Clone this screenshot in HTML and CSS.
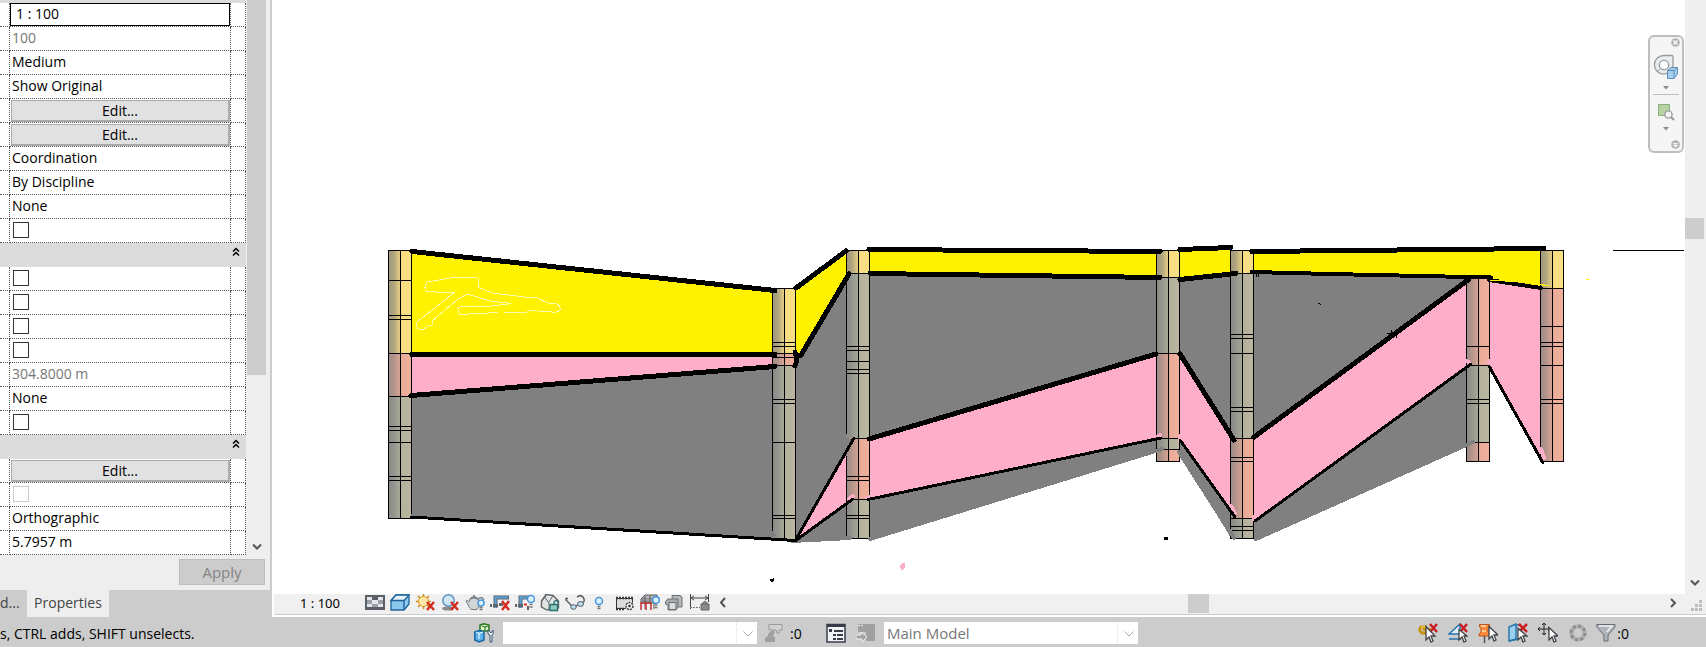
FILE: index.html
```html
<!DOCTYPE html>
<html lang="en">
<head>
<meta charset="utf-8">
<title>Model view</title>
<link rel="stylesheet" href="styles.css">
</head>
<body>
<div class="workspace">
  <aside class="side">
    <div class="panel">
      <div class="properties">
        <table class="grid">
          <colgroup><col class="col-name"><col class="col-value"><col class="col-link"></colgroup>
          <tbody>
            <tr><td></td><td class="tight"><input class="scale" type="text" value="1 : 100" aria-label="View scale"></td><td></td></tr>
            <tr><td></td><td class="muted">100</td><td></td></tr>
            <tr><td></td><td>Medium</td><td></td></tr>
            <tr><td></td><td>Show Original</td><td></td></tr>
            <tr><td></td><td class="tight"><button class="edit" type="button">Edit...</button></td><td></td></tr>
            <tr><td></td><td class="tight"><button class="edit" type="button">Edit...</button></td><td></td></tr>
            <tr><td></td><td>Coordination</td><td></td></tr>
            <tr><td></td><td>By Discipline</td><td></td></tr>
            <tr><td></td><td>None</td><td></td></tr>
            <tr><td></td><td><input class="check" type="checkbox" aria-label="Sun path"></td><td></td></tr>
            <tr class="group"><td colspan="3"><button class="fold" type="button" aria-label="Collapse group"><svg width="8" height="10" viewBox="0 0 8 10"><path d="M1 4.500 4 1.500 7 4.500M1 8.500 4 5.500 7 8.500"/></svg></button></td></tr>
            <tr><td></td><td><input class="check" type="checkbox" aria-label="Crop view"></td><td></td></tr>
            <tr><td></td><td><input class="check" type="checkbox" aria-label="Crop region visible"></td><td></td></tr>
            <tr><td></td><td><input class="check" type="checkbox" aria-label="Annotation crop"></td><td></td></tr>
            <tr><td></td><td><input class="check" type="checkbox" aria-label="Far clip active"></td><td></td></tr>
            <tr><td></td><td class="muted">304.8000 m</td><td></td></tr>
            <tr><td></td><td>None</td><td></td></tr>
            <tr><td></td><td><input class="check" type="checkbox" aria-label="Section box"></td><td></td></tr>
            <tr class="group"><td colspan="3"><button class="fold" type="button" aria-label="Collapse group"><svg width="8" height="10" viewBox="0 0 8 10"><path d="M1 4.500 4 1.500 7 4.500M1 8.500 4 5.500 7 8.500"/></svg></button></td></tr>
            <tr><td></td><td class="tight"><button class="edit" type="button">Edit...</button></td><td></td></tr>
            <tr><td></td><td><input class="check" type="checkbox" disabled aria-label="Locked orientation"></td><td></td></tr>
            <tr><td></td><td>Orthographic</td><td></td></tr>
            <tr><td></td><td>5.7957 m</td><td></td></tr>
          </tbody>
        </table>
        <div class="side-scroll">
          <div class="side-thumb"></div>
          <svg width="12" height="10" viewBox="0 0 12 10"><path class="chevron" d="M2 2.500 6 6.500 10 2.500"/></svg>
        </div>
      </div>
      <div class="actions"><button class="apply" type="button" disabled>Apply</button></div>
    </div>
    <div class="tabs"><button class="tab" type="button">d...</button><button class="tab active" type="button">Properties</button></div>
  </aside>

  <main class="view">
    <div class="stage">
      <div class="canvas">
        <svg class="section" viewBox="272 0 1413 594" role="img" aria-label="Soil strata between seven boreholes">
          <defs>
            <linearGradient id="sand"><stop offset="0" stop-color="#9e957e"/><stop offset=".25" stop-color="#b0a57f"/><stop offset=".5" stop-color="#e2ca82"/><stop offset=".6" stop-color="#f7dc82"/><stop offset="1" stop-color="#f8df84"/></linearGradient>
            <linearGradient id="clay"><stop offset="0" stop-color="#9c8b87"/><stop offset=".25" stop-color="#b3948b"/><stop offset=".5" stop-color="#d3a293"/><stop offset=".6" stop-color="#e9ab98"/><stop offset="1" stop-color="#efb09b"/></linearGradient>
            <linearGradient id="rock"><stop offset="0" stop-color="#898986"/><stop offset=".25" stop-color="#94958c"/><stop offset=".5" stop-color="#a5a797"/><stop offset=".6" stop-color="#b5b29c"/><stop offset="1" stop-color="#bab6a1"/></linearGradient>
          </defs>
          <g shape-rendering="crispEdges">
            <g fill="#808080">
              <path d="M411 395 773 366V539L411 517Z"/>
              <path d="M796 355H802L848 274V538L820 541H796Z"/>
              <path d="M870 273 1157 277V452L870 540Z"/>
              <path d="M1180 280 1231 273V538L1180 455Z"/>
              <path d="M1254 272 1467 277V445L1256 541H1254Z"/>
            </g>
            <g fill="#fff200">
              <path d="M411 252 773 290V354H411Z"/>
              <path d="M796 288 847 251V276L801 355H796Z"/>
              <path d="M870 250 1157 252V277L870 273Z"/>
              <path d="M1180 250 1231 248V274L1180 280Z"/>
              <path d="M1254 252 1541 249V288L1489 279 1254 273Z"/>
            </g>
            <g fill="#ffaec9">
              <path d="M411 354H773V366L411 395Z"/>
              <path d="M796 540 847 450V504Z"/>
              <path d="M870 438 1157 354V438L870 499Z"/>
              <path d="M1180 354 1231 438V512L1180 440Z"/>
              <path d="M1254 438 1467 280V366L1254 520Z"/>
              <path d="M1489 280 1541 289V461L1489 366Z"/>
            </g>
            <g class="bore">
              <rect fill="url(#sand)" x="388" y="250" width="23" height="103"/><rect fill="url(#clay)" x="388" y="353" width="23" height="43"/><rect fill="url(#rock)" x="388" y="396" width="23" height="122"/>
              <path d="M388.500 518.500V250.500H411.500V514M388 518.500H411M400.500 250V518M388 280.500H411M388 315.500H411M388 319.500H411M388 353.500H411M388 396.500H411M388 426.500H411M388 430.500H411M388 442.500H411M388 476.500H411M388 480.500H411"/>
            </g>
            <g class="bore">
              <rect fill="url(#sand)" x="772" y="288" width="23" height="65"/><rect fill="url(#clay)" x="772" y="353" width="23" height="12"/><rect fill="url(#rock)" x="772" y="365" width="23" height="174"/>
              <path d="M772.500 532V288.500H795.500V538M784.500 288V538M772 342.500H795M772 346.500H795M772 353.500H795M772 357.500H795M772 365.500H795M772 399.500H795M772 403.500H795M772 442.500H795M772 515.500H795M772 518.500H795"/>
            </g>
            <g class="bore">
              <rect fill="url(#sand)" x="846" y="250" width="23" height="23"/><rect fill="url(#rock)" x="846" y="273" width="23" height="165"/><rect fill="url(#clay)" x="846" y="438" width="23" height="61"/><rect fill="url(#rock)" x="846" y="499" width="23" height="39"/>
              <path d="M846.500 434V250.500H869.500V538M846.500 456V536M852 538.500H869M858.500 250V538M846 273.500H869M846 346.500H869M846 350.500H869M846 361.500H869M846 369.500H869M846 373.500H869M852 438.500H869M846 476.500H869M846 480.500H869M852 499.500H869M846 515.500H869M846 518.500H869"/>
              <path class="fill-rock" d="M846 437 852 440 846 452Z"/>
            </g>
            <g class="bore">
              <rect fill="url(#sand)" x="1156" y="250" width="23" height="27"/><rect fill="url(#rock)" x="1156" y="277" width="23" height="76"/><rect fill="url(#clay)" x="1156" y="353" width="23" height="85"/><rect fill="url(#rock)" x="1156" y="438" width="23" height="11"/><rect fill="url(#clay)" x="1156" y="449" width="23" height="12"/>
              <path d="M1156.500 250.500H1179.500V461.500H1156.500ZM1168.500 250V461M1156 277.500H1179M1156 353.500H1179M1156 438.500H1179M1156 449.500H1179"/>
            </g>
            <g class="bore">
              <rect fill="url(#sand)" x="1230" y="250" width="23" height="23"/><rect fill="url(#rock)" x="1230" y="273" width="23" height="165"/><rect fill="url(#clay)" x="1230" y="438" width="23" height="80"/><rect fill="url(#rock)" x="1230" y="518" width="23" height="20"/>
              <path d="M1230.500 250.500H1253.500V538.500H1230.500ZM1242.500 250V538M1230 273.500H1253M1230 334.500H1253M1230 338.500H1253M1230 353.500H1253M1230 407.500H1253M1230 411.500H1253M1230 438.500H1253M1230 457.500H1253M1230 461.500H1253M1230 518.500H1253M1230 526.500H1253M1230 530.500H1253"/>
            </g>
            <g class="bore">
              <rect fill="url(#clay)" x="1466" y="278" width="23" height="87"/><rect fill="url(#rock)" x="1466" y="365" width="23" height="77"/><rect fill="url(#clay)" x="1466" y="442" width="23" height="19"/>
              <path d="M1466.500 278.500H1489.500V461.500H1466.500ZM1478.500 278V461M1466 346.500H1489M1466 365.500H1489M1466 399.500H1489M1466 403.500H1489M1466 442.500H1489"/>
            </g>
            <g class="bore">
              <rect fill="url(#sand)" x="1540" y="250" width="23" height="38"/><rect fill="url(#clay)" x="1540" y="288" width="23" height="173"/>
              <path d="M1540.500 250.500H1563.500V461.500H1540.500ZM1552.500 250V461M1540 288.500H1563M1540 326.500H1563M1540 342.500H1563M1540 346.500H1563M1540 365.500H1563M1540 399.500H1563M1540 403.500H1563"/>
            </g>
            <g class="pink-brush"><path d="M849 499 853 496M867 498 872 497M1157 437 1160 435M1180 436V440M1231 506 1235 513M1254 517V519M1466 361 1469 362M1489 361 1490 365M1541 449 1544 458"/></g>
            <g class="rock-brush"><path d="M772 533 774 535M792 541 850 538M870 539 1162 449M1179 452 1234 538M1256 539 1473 442"/></g>
            <g class="bold">
              <path d="M412 251.500 775 290.500M412 354.500H775M411 395.500 775 366.500"/>
              <path d="M796 288 846 251M849 274 801 355H797M795 352 797 360 795 366"/>
              <path d="M869 249.500 1160 251.500M870 273.500 1160 277.500M869 439 1156 354"/>
              <path d="M1180 249.500 1231 247.500M1180 279.500 1236 273.500M1180 354 1234 440"/>
              <path d="M1252 251.500 1544 248.500M1254 437 1468 280"/>
            </g>
            <g class="medium"><path d="M1252 272 1330 274 1491 277.500M1489 280 1541 288"/></g>
            <g class="thin"><path d="M411 517 795 540.500M795 541 854 438M795 541 853 499M868 499.500 1161 438M1180 440 1235 517M1255 521 1471 364M1489 366 1543 463"/></g>
            <path class="hair" fill="none" d="M1387 333.500H1397M1391.500 330V337M1396.500 332V338M1256.500 274V277M1258.500 273V277M1318 303.500H1320M1320 304.500H1321"/>
            <path class="scribble" d="M437 291.500H427Q423 288 427 282L445 279 452 277.500H476Q480 279 478 287L492 293 525 297 537 298 548 303H555Q561 305 560 310 557 313 552 312L530 310.500 526 312.500H504M498 312.500 460 314.500Q455 307 462 306.500H486L505 304.500 511 303.500 490 301 467 294 457 300 432 321V325L428 326 423 330Q415 330 417 322L455 292H437"/>
            <path class="hair" d="M1613 250.500H1684"/>
            <path d="M1164 537H1168V540H1164ZM770 579H773V578H774V581H773V582H771V581H770Z"/>
            <path fill="#ffaec9" d="M900 565 902 563H905V567L903 570H901Z"/>
            <path fill="#fff200" d="M1586 279H1589V280H1586ZM1540 284H1545V285H1549V286H1543L1540 285Z"/>
            <path fill="#fff200" d="M1490 280H1505V281H1490ZM1505 281H1515V282H1505Z"/>
          </g>
        </svg>
        <nav class="navbar" aria-label="View navigation">
          <button class="nav-small" type="button" aria-label="Close"><svg width="9" height="9" viewBox="0 0 9 9"><circle cx="4.500" cy="4.500" r="4.300" fill="#b2b2b2"/><path d="m2.500 2.500 4 4m0-4-4 4" stroke="#fff" stroke-width="1.300"/></svg></button>
          <button class="nav-tool wheel" type="button" aria-label="Steering wheel"><svg width="26" height="26" viewBox="0 0 26 26"><path d="M11 1.500H19Q20 1.500 20 3V11A9.300 9.300 0 1 1 11 1.500Z" fill="#e9ebec" stroke="#989da3" stroke-width="1.300"/><circle cx="11" cy="11" r="4.700" fill="#fff" stroke="#989da3" stroke-width="1.300"/><path d="M7.500 14.500 4.500 17.500" stroke="#989da3"/><path d="M14.500 16.500 18 13.500H24.500V20L21 24.500H14.500Z" fill="#a6cdea" stroke="#5c8fbd"/><path d="M14.500 16.500H21V24.500M21 16.500 24.500 13.500" fill="none" stroke="#5c8fbd"/></svg></button>
          <button class="nav-small mid" type="button" aria-label="Wheel options"><svg width="6" height="4" viewBox="0 0 6 4"><path d="M0 0H6L3 3.500Z" fill="#8c8c8c"/></svg></button>
          <hr class="nav-rule">
          <button class="nav-tool" type="button" aria-label="Zoom"><svg width="18" height="18" viewBox="0 0 18 18"><path d="M1.500 1.500H12.500V12.500H1.500Z" fill="#b9d2a4" stroke="#83b179"/><circle cx="11.500" cy="11.500" r="3.600" fill="#f5f5f5" stroke="#999" stroke-width="1.300"/><path d="m14 14 3 3" stroke="#999" stroke-width="2"/></svg></button>
          <button class="nav-small mid" type="button" aria-label="Zoom options"><svg width="6" height="4" viewBox="0 0 6 4"><path d="M0 0H6L3 3.500Z" fill="#8c8c8c"/></svg></button>
          <button class="nav-small last" type="button" aria-label="Customize"><svg width="9" height="9" viewBox="0 0 9 9"><circle cx="4.500" cy="4.500" r="4.300" fill="#b2b2b2"/><path d="M2 3.500H7M2.500 5H6.500L4.500 7Z" stroke="#fff" fill="#fff" stroke-width=".8"/></svg></button>
        </nav>
      </div>
      <div class="v-scroll"><div class="v-thumb"></div><svg width="12" height="10" viewBox="0 0 12 10"><path class="chevron" d="M2 2.500 6 6.500 10 2.500"/></svg></div>
    </div>
    <div class="viewbar">
      <span class="view-scale">1 : 100</span>
      <div class="view-tools">
        <button type="button" aria-label="Detail level"><svg viewBox="0 0 20 20"><path d="M0 2H20V17H0Z" fill="#5b5f66"/><path d="M2 4H7V7H2ZM13 4H18V7H13ZM7 7H13V11H7ZM2 11H7V14H2ZM13 11H18V14H13Z" fill="#e4e6e9"/><path d="M2 7H7V11H2ZM13 7H18V11H13ZM7 11H13V14H7Z" fill="#9ba0a6"/></svg></button>
        <button type="button" aria-label="Visual style"><svg viewBox="0 0 20 20"><path d="M1 7.500 6 2H19V11L14 17H1Z" fill="#8cc7ed" stroke="#1f6297" stroke-width="1.300"/><path d="M1 7.500 6 2H19L14 7.500Z" fill="#e2f2fb" stroke="#1f6297" stroke-width="1.300"/><path d="M14 7.500V17" stroke="#1f6297" stroke-width="1.300"/></svg></button>
        <button type="button" aria-label="Sun path off"><svg viewBox="0 0 20 20"><path d="M8.500 1V16M1 8.500H16M3 3 14 14M14 3 3 14" stroke="#d18a18" stroke-width="1.500"/><circle cx="8.500" cy="8.500" r="5" fill="#ffe9a8" stroke="#d79a22"/><path class="cross" d="m12 9 7 8m0-8-7 8"/></svg></button>
        <button type="button" aria-label="Shadows off"><svg viewBox="0 0 20 20"><ellipse cx="8" cy="15.500" rx="6" ry="2" fill="#8a8a8a"/><circle cx="8.500" cy="7.500" r="5.700" fill="#cfe7f6" stroke="#5a8fbd" stroke-width="1.500"/><path class="cross" d="m11 9 7 8m0-8-7 8"/></svg></button>
        <button type="button" aria-label="Rendering"><svg viewBox="0 0 20 20"><path d="M5 6Q9 4 13 6Q16 11 12 16.500H6Q4 14 1 8Q2 6 4 9Z" fill="#d3d6d8" stroke="#777c80"/><path d="M5 6Q9 2 13 6M8 3H10M13 6Q17 3 19 7" fill="none" stroke="#777c80" stroke-width="1.300"/><circle class="bulb" cx="16" cy="10" r="3"/><path class="socket" d="M14.500 14.500H17.500M14.500 16.500H17.500"/></svg></button>
        <button type="button" aria-label="Crop view off"><svg viewBox="0 0 20 20"><path d="M5.500 15V4.500H19" fill="none" stroke="#60656b" stroke-width="4"/><path d="M5.500 15V4.500H18" fill="none" stroke="#55a5da" stroke-width="2"/><path d="M0 11H2V14H0ZM3 11H8V14H3ZM9 10H13V13H9Z" fill="#60656b"/><path class="cross" d="m12 8 7 9m0-9-7 9"/></svg></button>
        <button type="button" aria-label="Crop region hidden"><svg viewBox="0 0 20 20"><path d="M5.500 15V4.500H14" fill="none" stroke="#60656b" stroke-width="4"/><path d="M5.500 15V4.500H14" fill="none" stroke="#55a5da" stroke-width="2"/><path d="M0 11H2V14H0ZM3 11H8V14H3ZM12 13H14V17H12Z" fill="#60656b"/><path d="M9 11.500H12" stroke="#d32" stroke-width="2"/><circle class="bulb" cx="16" cy="6" r="3.500"/><path class="socket" d="M14.500 11.500H17.500M14.500 14H17.500"/></svg></button>
        <button type="button" aria-label="Unlocked 3D view"><svg viewBox="0 0 20 20"><path d="M1.500 8 6 1.500 13 2.500 18.500 8V15L7 17 1.500 14Z" fill="#e2e4e5" stroke="#62676a" stroke-width="1.400"/><path d="M1.500 8 5 4.500 9 10V17M6 1.500 5 4.500M13 2.500 9 9" fill="none" stroke="#62676a"/><path d="M10 11.500H17.500V17.500H10Z" fill="#8ecbc2" stroke="#26716c" stroke-width="1.300"/><path d="M14 11V9Q16 6 18 9V10" fill="none" stroke="#26716c" stroke-width="1.300"/></svg></button>
        <button type="button" aria-label="Hide or isolate"><svg viewBox="0 0 20 20"><path d="M3 5.500H1V7L7 13M11 13 19 8.500Q20 4 15 2.500L12 4" fill="none" stroke="#555b60" stroke-width="1.400"/><ellipse cx="8.500" cy="14" rx="2.800" ry="2.300" fill="#b9dff3" stroke="#555b60"/><ellipse cx="15.500" cy="11" rx="3" ry="2.400" fill="#b9dff3" stroke="#555b60"/></svg></button>
        <button type="button" aria-label="Reveal hidden"><svg viewBox="0 0 20 20"><circle class="bulb" cx="9" cy="8" r="3.500"/><path class="socket" d="M7.500 13.500H10.500M7.500 15.500H10.500"/></svg></button>
        <button type="button" aria-label="Temporary view properties"><svg viewBox="0 0 20 20"><path d="M1.500 5.500H17.500V15.500H1.500Z" fill="#dcdcdc" stroke="#34373b"/><path d="M1 5H18M1 16H10" stroke="#34373b" stroke-width="2.500" stroke-dasharray="2 1"/><circle cx="14.500" cy="13" r="4.500" fill="#eee"/><circle cx="14.500" cy="13" r="3.500" fill="#eee" stroke="#34373b" stroke-width="1.500" stroke-dasharray="2 1"/><circle cx="14.500" cy="13" r="1.300" fill="#34373b"/></svg></button>
        <button type="button" aria-label="Analytical model hidden"><svg viewBox="0 0 20 20"><path d="M1 6 5 2H17V6ZM1 6V10H14M5 3V16M10 3V10M14 4V16M2 8H14" fill="#b7babd" stroke="#55595d"/><path d="M1 17V10H11V17M6 10V17" fill="none" stroke="#c22f2f" stroke-width="1.500"/><circle class="bulb" cx="16" cy="7" r="3.300"/><path class="socket" d="M14.500 12H17.500M14.500 14.500H17.500"/></svg></button>
        <button type="button" aria-label="Displacement sets"><svg viewBox="0 0 20 20"><path d="M7 2.500H15L17 4V14H8Z" fill="#b6b9bb" stroke="#6d7175"/><path d="M.5 8.500 3 6H13V14L11 17H3V12L.5 11Z" fill="#a9acae" stroke="#6d7175"/><path d="M4 9.500H11V16.500H4Z" fill="#dadcdd" stroke="#6d7175"/></svg></button>
        <button type="button" aria-label="Constraints"><svg viewBox="0 0 20 20"><path d="M.5 1V16M18.500 1V9M1 5H18M4 3 1 5 4 7M15 3 18 5 15 7" fill="none" stroke="#40464b"/><path d="M0 14.500H10" stroke="#777" stroke-dasharray="2 1"/><path d="M11 11H19V17H11ZM12 11Q15 6 18 11" fill="#8c8c8c" stroke="#666"/></svg></button>
        <button class="collapse" type="button" aria-label="Scroll left"><svg viewBox="0 0 20 20"><path class="chevron" d="M12 5 8 9.500 12 14"/></svg></button>
      </div>
      <div class="h-scroll"><div class="h-thumb"></div></div>
      <svg class="h-next" width="12" height="12" viewBox="0 0 12 12"><path class="chevron" d="M4 2 8 6 4 10"/></svg>
      <svg class="grip" width="12" height="12" viewBox="0 0 12 12"><path d="M8 0H11V3H8ZM4 4H7V7H4ZM8 4H11V7H8ZM0 8H3V11H0ZM4 8H7V11H4ZM8 8H11V11H8Z" fill="#bdbdbd"/></svg>
    </div>
  </main>
</div>

<footer class="status">
  <span class="hint">s, CTRL adds, SHIFT unselects.</span>
  <button class="tool workset" type="button" aria-label="Worksets"><svg viewBox="0 0 20 20"><path d="M6 2 10 .8 15 2V8H6Z" fill="#d9efc9" stroke="#26761f" stroke-width="1.500"/><path d="M8 3 11 4 14 3M11 4V8" fill="none" stroke="#26761f"/><path d="M.8 9 5 7.500 10 9V17L5 19 .8 17Z" fill="#5fb2e8" stroke="#1567a5" stroke-width="1.500"/><path d="M2 9 5 10.500 9 9M5 10V16" fill="none" stroke="#fff"/><path d="M14 7V10Q14 12 16 12V19H18V12Q20 11 19 7L17 10Z" fill="#edf1f5" stroke="#395776"/></svg></button>
  <div class="combo"><select aria-label="Active workset" disabled><option></option></select><svg width="12" height="8" viewBox="0 0 12 8"><path d="M1.500 1.500 6 6 10.500 1.500"/></svg></div>
  <button class="tool request" type="button" aria-label="Editing requests"><svg viewBox="0 0 20 20"><path d="M5 1.500H18V7H15V10H13L12 7H5Z" fill="#d2d2d2" stroke="#999"/><path d="M9 7 11 9 9 13 11 14V19H1V15L4 13V11L6 9Z" fill="#a0a0a0"/></svg><span>:0</span></button>
  <button class="tool options" type="button" aria-label="Design options"><svg viewBox="0 0 20 20"><path d="M1 1.500H19V19H1Z" fill="#f1f3f5" stroke="#373d48" stroke-width="1.500"/><path d="M1 2.500H19" stroke="#373d48" stroke-width="3"/><path d="M3 6H6V9H3ZM8 7H17V9H8ZM7 11H10V13H7ZM11 11H17V13H11ZM7 15H10V17H7ZM11 15H17V17H11Z" fill="#373d48"/></svg></button>
  <button class="tool pick" type="button" aria-label="Add to set"><svg viewBox="0 0 20 20"><path d="M2 1H19V18H10V9H2Z" fill="#a0a0a0"/><path d="M3 2V3M6 2V3" stroke="#eee" stroke-width="2"/><path d="M0 12H5V9L11 14 6 19V16H0Z" fill="#a3a3a3" stroke="#eee"/></svg></button>
  <div class="combo"><select aria-label="Active design option" disabled><option>Main Model</option></select><svg width="12" height="8" viewBox="0 0 12 8"><path d="M1.500 1.500 6 6 10.500 1.500"/></svg></div>
  <div class="select-tools">
    <button class="tool" type="button" aria-label="Select links"><svg viewBox="0 0 20 20"><path d="M9 4H3Q0 7 4 10H10M5 6.500H13" fill="none" stroke="#c9930f" stroke-width="3"/><path d="M3 4H9" stroke="#ffe04c"/><path class="deny" d="m12 1 7 8m0-8-7 8"/><path class="pointer" d="M8 3.500V17L11 14 13 19 15 18 13 13H17Z"/></svg></button>
    <button class="tool" type="button" aria-label="Select underlay elements"><svg viewBox="0 0 20 20"><path d="M1 11 12 1V11ZM1 16H13" fill="#e4f0f8" stroke="#2472ac" stroke-width="1.500"/><path class="deny" d="m12 1 7 8m0-8-7 8"/><path class="pointer" d="M11 6.500V17L14 14 16 19 18 18 16 13H19Z"/></svg></button>
    <button class="tool" type="button" aria-label="Select pinned elements"><svg viewBox="0 0 20 20"><path d="M1.500 1.500H11.500V4L10 5V9L12 11V13H1V11L3 9V5L1.500 4Z" fill="#f68a38" stroke="#bf561c"/><path d="M3 3H8M4 8H8" stroke="#ffe1b6" stroke-width="1.500"/><path d="M6.500 13V20" stroke="#555" stroke-width="1.500"/><path class="pointer" d="M11 3.500V16L14 13 16 18 18 17 16 12H20Z"/></svg></button>
    <button class="tool" type="button" aria-label="Select elements by face"><svg viewBox="0 0 20 20"><path d="M1 4 8 1V16L1 18Z" fill="#9bd0ef" stroke="#2878ad" stroke-width="1.500"/><path d="M8 2H11M1 18 11 16" stroke="#2878ad" stroke-width="1.500"/><path class="deny" d="m11 1 8 8m0-8-8 8"/><path class="pointer" d="M10 5.500V17L13 14 15 19 17 18 15 13H19Z"/></svg></button>
    <button class="tool" type="button" aria-label="Drag elements on selection"><svg viewBox="0 0 20 20"><path d="M6 0V12M0 6H12M4 2 6 0 8 2M4 10 6 12 8 10M2 4 0 6 2 8M10 4 12 6 10 8" fill="none" stroke="#222"/><path class="pointer" d="M11 4.500V17L14 14 16 19 18 18 16 13H20Z"/></svg></button>
    <button class="tool" type="button" aria-label="Background processes"><svg viewBox="0 0 20 20"><circle cx="10" cy="10" r="6.500" fill="none" stroke="#b0b0b0" stroke-width="4"/><circle cx="10" cy="10" r="7" fill="none" stroke="#8d8d8d" stroke-width="3" stroke-dasharray="3 2.500"/></svg></button>
    <button class="tool filter" type="button" aria-label="Filter"><svg viewBox="0 0 20 20"><path d="M.8 1.500H19V4L12 12V18H8V12L.8 4Z" fill="#b1b6bc" stroke="#656a70"/><path d="M3 3H16L11 9" fill="none" stroke="#f0f2f4" stroke-width="1.500"/></svg><span>:0</span></button>
  </div>
</footer>
</body>
</html>
```
FILE: styles.css
```css
* { box-sizing: border-box; }

body {
  margin: 0;
  height: 100vh;
  display: flex;
  flex-direction: column;
  overflow: hidden;
  background: #ccc;
  color: #000;
  font: 14px/20px "Open Sans", "Noto Sans", sans-serif;
}

button, input, select {
  margin: 0;
  padding: 0;
  border: 0;
  border-radius: 0;
  background: none;
  color: inherit;
  font: inherit;
}

svg { display: block; }

.chevron { fill: none; stroke: #555; stroke-width: 2; }
.cross { fill: none; stroke: #d22d20; stroke-width: 2.5; }
.bulb { fill: #dff2ff; stroke: #4695dc; stroke-width: 1.5; }
.socket { fill: none; stroke: #777; stroke-width: 1.5; }
.deny { fill: none; stroke: #c81e24; stroke-width: 2.5; }
.pointer { fill: #fff; stroke: #3f4348; stroke-width: 1.3; }

.workspace { flex: 1; min-height: 0; display: flex; }

/* Properties palette */
.side { width: 272px; flex: none; display: flex; flex-direction: column; }
.panel {
  flex: 1;
  min-height: 0;
  display: flex;
  flex-direction: column;
  background: #eee;
  border-right: 2px solid #ccc;
}
.properties { flex: 1; min-height: 0; display: flex; gap: 1px; }
.grid {
  width: 246px;
  height: 0;
  table-layout: fixed;
  border-collapse: separate;
  border-spacing: 0;
  border-top: 3px solid #dcdcdc;
  background: #fff;
}
.col-name { width: 10px; }
.col-value { width: 221px; }
.col-link { width: 15px; }
.grid td {
  height: 24px;
  padding: 0 0 2px 2px;
  border-right: 1px dotted #555;
  border-bottom: 1px dotted #555;
  white-space: nowrap;
  vertical-align: middle;
}
.grid td.tight { padding: 0; }
.grid .muted { color: #777; }
.grid .group td { padding: 0 6px 6px 0; border: 0; background: #dcdcdc; }
.fold { display: block; margin-left: auto; }
.fold path { fill: none; stroke: #000; stroke-width: 1.5; }
.scale { display: block; width: 220px; height: 23px; padding: 0 0 2px 5px; border: 1px solid #000; background: #fff; }
.edit {
  display: block;
  width: 219px;
  height: 22px;
  margin: 1px 0 0 1px;
  border: solid #aaa;
  border-width: 1px 2px 2px 1px;
  background: #e1e1e1;
  line-height: 18px;
}
.check {
  appearance: none;
  display: block;
  width: 16px;
  height: 16px;
  margin-left: 1px;
  border: 1px solid #333;
  background: #fff;
}
.check:disabled { border-color: #ccc; }

.side-scroll {
  width: 19px;
  display: flex;
  flex-direction: column;
  justify-content: space-between;
  align-items: center;
  padding-bottom: 5px;
}
.side-thumb { width: 100%; height: 375px; background: #cdcdcd; }
.actions { height: 33px; padding: 2px 5px 5px 0; display: flex; justify-content: flex-end; }
.apply { width: 86px; height: 26px; border: 1px solid #bfbfbf; background: #ccc; color: #838383; font-size: 15px; }
.tabs { height: 27px; display: flex; }
.tab { width: 27px; padding-bottom: 2px; color: #444; text-align: left; }
.tab.active { width: 82px; background: #eee; text-align: center; }

/* Drawing area */
.view { flex: 1; min-width: 0; display: flex; flex-direction: column; background: #fff; }
.stage { flex: 1; min-height: 0; display: flex; }
.canvas { position: relative; flex: 1; min-width: 0; }
.section { width: 100%; height: 100%; }
.bore path { fill: none; stroke: #000; stroke-width: 1; }
.bore .fill-rock { fill: #808080; stroke: none; }
.bold, .medium, .thin { fill: none; stroke: #000; stroke-linecap: round; }
.bold { stroke-width: 5; }
.medium { stroke-width: 4; }
.thin { stroke-width: 3; }
.pink-brush { fill: none; stroke: #ffaec9; stroke-width: 4; stroke-linecap: round; }
.rock-brush { fill: none; stroke: #808080; stroke-width: 4; stroke-linecap: round; }
.scribble { fill: none; stroke: #fffbb0; stroke-width: 1; }
.hair { stroke: #000; }

.navbar {
  position: absolute;
  top: 35px;
  right: 1px;
  width: 36px;
  height: 118px;
  display: flex;
  flex-direction: column;
  align-items: center;
  padding: 1px 2px 2px;
  border: 2px solid #bebebe;
  border-radius: 6px;
  background: #f5f5f5;
}
.nav-small { align-self: flex-end; }
.nav-small.mid { align-self: center; margin-top: 6px; }
.nav-small.last { margin-top: auto; }
.nav-tool { margin-top: 8px; }
.nav-tool.wheel { margin-top: 7px; }
.nav-rule { width: 26px; height: 1px; margin: 4px 0 0; border: 0; background: #bbb; }

.v-scroll {
  width: 21px;
  flex: none;
  display: flex;
  flex-direction: column;
  justify-content: space-between;
  padding: 218px 2px 6px 0;
  background: #efefef;
}
.v-thumb { height: 21px; background: #cdcdcd; }
.v-scroll svg { align-self: center; }

.viewbar {
  height: 21px;
  flex: none;
  display: flex;
  align-items: center;
  margin: 0 0 2px 2px;
  padding: 0 0 2px 26px;
  border-bottom: 1px solid #ccc;
  background: #f0f0f0;
}
.view-scale { width: 65px; font: 13px/18px "Noto Sans", sans-serif; }
.view-tools { display: flex; gap: 5px; }
.view-tools svg { width: 20px; height: 20px; }
.collapse { margin-left: -2px; }
.h-scroll { flex: 1; align-self: flex-start; display: flex; padding-left: 455px; }
.h-thumb { width: 21px; height: 19px; background: #cdcdcd; }
.h-next { margin-right: 12px; }
.grip { margin: 6px 3px 0 0; }

/* Status bar */
.status { height: 30px; flex: none; display: flex; align-items: center; padding-top: 2px; background: #ccc; }
.hint { width: 474px; padding-top: 2px; white-space: nowrap; }
.tool { display: flex; align-items: center; }
.tool svg { width: 20px; height: 20px; flex: none; }
.tool span { padding-top: 2px; }
.workset { margin-right: 9px; }
.request { width: 62px; margin-left: 7px; gap: 6px; }
.options { margin-right: 10px; }
.pick { margin-right: 8px; }
.combo { position: relative; width: 254px; height: 22px; background: #fff; }
.combo select { appearance: none; width: 100%; height: 22px; padding-left: 3px; color: #777; opacity: 1; font-size: 15px; line-height: 20px; }
.combo svg { position: absolute; top: 8px; right: 3px; fill: none; stroke: #aaa; }
.combo::after { content: ""; position: absolute; top: 0; right: 20px; height: 22px; border-left: 1px solid #eee; }
.select-tools { flex: 1; display: flex; justify-content: flex-end; gap: 10px; padding-right: 77px; }
.filter { gap: 1px; margin-left: -2px; }
```
